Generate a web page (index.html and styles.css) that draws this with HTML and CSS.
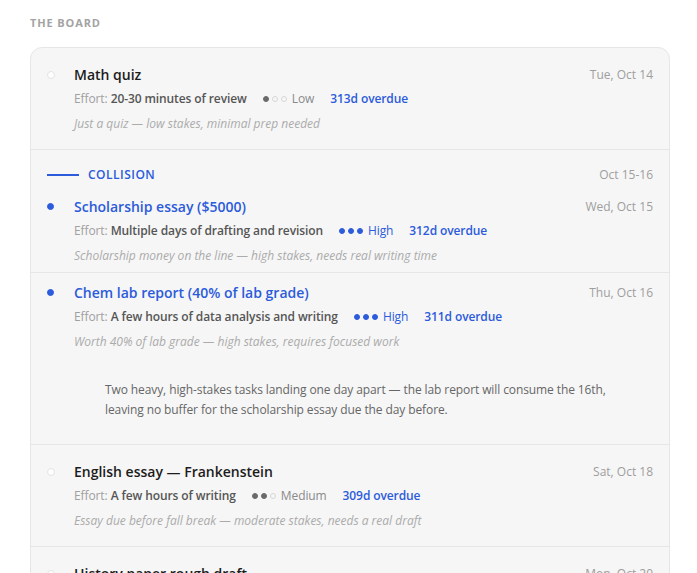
FILE: index.html
```html
<!DOCTYPE html>
<html lang="en">
<head>
<meta charset="utf-8">
<title>The Board</title>
<link rel="stylesheet" href="styles.css">
</head>
<body>
<main class="page">
  <h2 class="section-title">The Board</h2>
  <div class="board">
    <div class="row">
      <span class="marker"></span>
      <div class="body">
        <div class="title">Math quiz</div>
        <div class="meta">
          <span class="effort">Effort: <b>20-30 minutes of review</b></span>
          <span class="level"><span class="dots"><i class="on"></i><i></i><i></i></span>Low</span>
          <span class="overdue">313d overdue</span>
        </div>
        <div class="note">Just a quiz — low stakes, minimal prep needed</div>
      </div>
      <span class="date">Tue, Oct 14</span>
    </div>

    <div class="collision">
      <div class="collision-head">
        <span class="rule"></span>
        <span class="label">Collision</span>
        <span class="date">Oct 15-16</span>
      </div>
      <div class="row tight first">
        <span class="marker hot"></span>
        <div class="body">
          <div class="title blue">Scholarship essay ($5000)</div>
          <div class="meta">
            <span class="effort">Effort: <b>Multiple days of drafting and revision</b></span>
            <span class="level high"><span class="dots"><i class="on"></i><i class="on"></i><i class="on"></i></span>High</span>
            <span class="overdue">312d overdue</span>
          </div>
          <div class="note">Scholarship money on the line — high stakes, needs real writing time</div>
        </div>
        <span class="date">Wed, Oct 15</span>
      </div>
      <div class="row tight last">
        <span class="marker hot"></span>
        <div class="body">
          <div class="title blue">Chem lab report (40% of lab grade)</div>
          <div class="meta">
            <span class="effort">Effort: <b>A few hours of data analysis and writing</b></span>
            <span class="level high"><span class="dots"><i class="on"></i><i class="on"></i><i class="on"></i></span>High</span>
            <span class="overdue">311d overdue</span>
          </div>
          <div class="note">Worth 40% of lab grade — high stakes, requires focused work</div>
        </div>
        <span class="date">Thu, Oct 16</span>
      </div>
      <p class="collision-note">Two heavy, high-stakes tasks landing one day apart — the lab report will consume the 16th, leaving no buffer for the scholarship essay due the day before.</p>
    </div>

    <div class="row">
      <span class="marker"></span>
      <div class="body">
        <div class="title">English essay — Frankenstein</div>
        <div class="meta">
          <span class="effort">Effort: <b>A few hours of writing</b></span>
          <span class="level"><span class="dots"><i class="on"></i><i class="on"></i><i></i></span>Medium</span>
          <span class="overdue">309d overdue</span>
        </div>
        <div class="note">Essay due before fall break — moderate stakes, needs a real draft</div>
      </div>
      <span class="date">Sat, Oct 18</span>
    </div>

    <div class="row">
      <span class="marker"></span>
      <div class="body">
        <div class="title">History paper rough draft</div>
        <div class="meta">
          <span class="effort">Effort: <b>A weekend of research and outlining</b></span>
          <span class="level"><span class="dots"><i class="on"></i><i class="on"></i><i></i></span>Medium</span>
          <span class="overdue">307d overdue</span>
        </div>
        <div class="note">Rough draft only — moderate stakes</div>
      </div>
      <span class="date">Mon, Oct 20</span>
    </div>
  </div>
</main>
</body>
</html>
```

FILE: styles.css
```css
* { box-sizing: border-box; }

html, body {
  margin: 0;
  padding: 0;
  background: #ffffff;
}

body {
  font-family: "Segoe UI", "Open Sans", "Noto Sans", sans-serif;
  color: #1c1c1c;
}

.page {
  width: 640px;
  margin-left: 30px;
  padding-top: 15px;
}

.section-title {
  margin: 0 0 16px;
  font-size: 11px;
  line-height: 16px;
  font-weight: 700;
  letter-spacing: 0.08em;
  text-transform: uppercase;
  color: #a3a3a3;
}

.board {
  background: #f6f6f6;
  border: 1px solid #e6e6e6;
  border-radius: 12px;
  overflow: hidden;
}

.row {
  display: grid;
  grid-template-columns: 8px 1fr auto;
  column-gap: 19px;
  padding: 16px 16px 14px;
  border-bottom: 1px solid #e6e6e6;
}

.row.tight.first {
  padding: 8px 16px 5px;
}

.row.tight.last {
  padding: 9px 16px 0;
  border-bottom: none;
}

.marker {
  width: 8px;
  height: 8px;
  margin-top: 7px;
  border-radius: 50%;
  background: #ffffff;
  border: 1px solid #e3e3e3;
}

.marker.hot {
  background: #2c5bdb;
  border-color: #2c5bdb;
  width: 7px;
  height: 7px;
}

.body { min-width: 0; }

.title {
  font-size: 14px;
  line-height: 22px;
  font-weight: 600;
  color: #1c1c1c;
}

.title.blue { color: #2c5bdb; }

.meta {
  display: flex;
  align-items: center;
  gap: 16px;
  margin-top: 2px;
  font-size: 12px;
  line-height: 22px;
  letter-spacing: -0.1px;
  white-space: nowrap;
}

.effort { color: #a0a0a0; }

.effort b {
  font-weight: 600;
  color: #555555;
}

.level {
  display: inline-flex;
  align-items: center;
  gap: 5px;
  color: #8a8a8a;
}

.level.high { color: #2c5bdb; }

.dots {
  display: inline-flex;
  gap: 3px;
}

.dots i {
  width: 6px;
  height: 6px;
  border-radius: 50%;
  border: 1px solid #d6d6d6;
  background: transparent;
}

.dots i.on {
  background: #6a6a6a;
  border-color: #6a6a6a;
}

.level.high .dots i.on {
  background: #2c5bdb;
  border-color: #2c5bdb;
}

.overdue {
  font-weight: 600;
  color: #2c5bdb;
}

.note {
  margin-top: 3px;
  font-size: 12px;
  line-height: 22px;
  font-style: italic;
  color: #ababab;
}

.date {
  font-size: 12px;
  line-height: 22px;
  color: #9e9e9e;
  white-space: nowrap;
}

.collision {
  border-bottom: 1px solid #e6e6e6;
}

.collision-head {
  display: flex;
  align-items: center;
  padding: 17px 16px 5px;
  line-height: 16px;
}

.collision-head .rule {
  width: 32px;
  height: 2px;
  background: #2c5bdb;
  margin-right: 9px;
}

.collision-head .label {
  flex: 1;
  font-size: 12px;
  font-weight: 600;
  letter-spacing: 0.04em;
  text-transform: uppercase;
  color: #2c5bdb;
}

.collision-head .date { line-height: 16px; }

.collision-note {
  margin: 0;
  padding: 27px 16px 24px 74px;
  max-width: 600px;
  font-size: 12px;
  line-height: 20px;
  letter-spacing: -0.1px;
  color: #666666;
}
```
